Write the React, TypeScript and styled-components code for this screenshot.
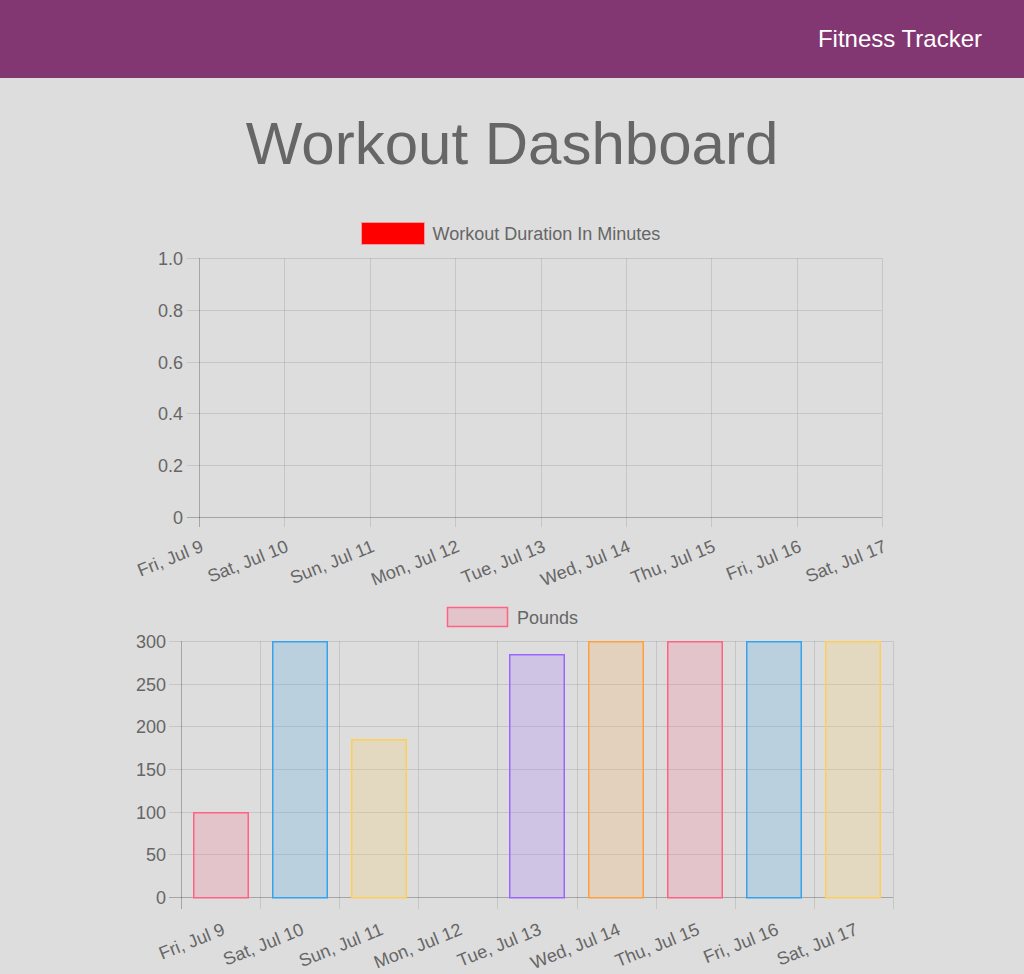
import React from 'react';
import styled, { createGlobalStyle } from 'styled-components';

const GlobalStyle = createGlobalStyle`
  html, body {
    margin: 0;
    padding: 0;
    background-color: #dddddd;
    font-family: "Liberation Sans", Arial, Helvetica, sans-serif;
  }
`;

const Header = styled.header`
  height: 78px;
  background-color: #833772;
  display: flex;
  align-items: center;
  justify-content: flex-end;
  padding-right: 42px;
`;

const Brand = styled.div`
  color: #ffffff;
  font-size: 24px;
  line-height: 28px;
`;

const Main = styled.main`
  display: flex;
  flex-direction: column;
  align-items: center;
`;

const Title = styled.h1`
  margin: 31px 0 32px;
  font-size: 60px;
  line-height: 69px;
  font-weight: 400;
  color: #666666;
  text-align: center;
`;

const ChartBox = styled.section`
  width: 768px;
  display: flex;
`;

const ChartSvg = styled.svg`
  display: block;
  font-family: "Liberation Sans", Arial, Helvetica, sans-serif;
  font-size: 18px;
  fill: #666666;
`;

const GRID = 'rgba(0,0,0,0.1)';
const AXIS = 'rgba(0,0,0,0.25)';
const ROT = 22;

const labels = [
  'Fri, Jul 9',
  'Sat, Jul 10',
  'Sun, Jul 11',
  'Mon, Jul 12',
  'Tue, Jul 13',
  'Wed, Jul 14',
  'Thu, Jul 15',
  'Fri, Jul 16',
  'Sat, Jul 17',
];

const palette = [
  [255, 99, 132],
  [54, 162, 235],
  [255, 206, 86],
  [75, 192, 192],
  [153, 102, 255],
  [255, 159, 64],
];

const pounds = [100, 300, 185, 0, 285, 300, 300, 300, 300];

const px = (v: number) => Math.round(v) + 0.5;

// line chart, empty dataset
const DurationChart = () => {
  const left = 71, right = 754, top = 48, bottom = 307;
  const yTicks = [1.0, 0.8, 0.6, 0.4, 0.2, 0];
  const step = (right - left) / (labels.length - 1);

  return (
    <ChartSvg width={768} height={384}>
      <rect x={233.5} y={12.5} width={63} height={22} fill="#ff0000" stroke="#f29a9a" strokeWidth={1} />
      <text x={304.5} y={24} dominantBaseline="central">Workout Duration In Minutes</text>

      {yTicks.map((t, i) => {
        const y = px(top + ((bottom - top) / 5) * i);
        return (
          <g key={t}>
            <line x1={59} x2={right} y1={y} y2={y} stroke={t === 0 ? AXIS : GRID} strokeWidth={1} />
            <text x={55} y={y} textAnchor="end" dominantBaseline="central">
              {t === 0 ? '0' : t.toFixed(1)}
            </text>
          </g>
        );
      })}

      {labels.map((l, i) => {
        const x = px(left + step * i);
        return (
          <g key={l}>
            <line x1={x} x2={x} y1={top} y2={bottom + 10} stroke={i === 0 ? AXIS : GRID} strokeWidth={1} />
            <text x={x + 5} y={341} textAnchor="end" transform={`rotate(-${ROT} ${x + 5} 341)`}>
              {l}
            </text>
          </g>
        );
      })}
    </ChartSvg>
  );
};

const PoundsChart = () => {
  const left = 53, right = 765, top = 47, bottom = 303;
  const yTicks = [300, 250, 200, 150, 100, 50, 0];
  const cat = (right - left) / labels.length;
  const barW = 56;
  const scale = (bottom - top) / 300;

  return (
    <ChartSvg width={768} height={378}>
      <rect x={319.5} y={13.5} width={60} height={19} fill="rgba(255,99,132,0.2)" stroke="rgb(255,99,132)" strokeWidth={1.5} />
      <text x={389} y={24} dominantBaseline="central">Pounds</text>

      {yTicks.map((t, i) => {
        const y = px(top + ((bottom - top) / 6) * i);
        return (
          <g key={t}>
            <line x1={41} x2={right} y1={y} y2={y} stroke={t === 0 ? AXIS : GRID} strokeWidth={1} />
            <text x={38} y={y} textAnchor="end" dominantBaseline="central">{t}</text>
          </g>
        );
      })}

      {Array.from({ length: labels.length + 1 }).map((_, i) => {
        const x = px(left + cat * i);
        return (
          <line key={i} x1={x} x2={x} y1={top} y2={bottom + 12} stroke={i === 0 ? AXIS : GRID} strokeWidth={1} />
        );
      })}

      {pounds.map((v, i) => {
        const [r, g, b] = palette[i % palette.length];
        const h = Math.round(v * scale);
        const x = Math.round(left + cat * i + (cat - barW) / 2) + 0.75;
        if (h <= 0) return null;
        return (
          <rect
            key={i}
            x={x}
            y={bottom - h + 0.75}
            width={barW - 1.5}
            height={h}
            fill={`rgba(${r},${g},${b},0.2)`}
            stroke={`rgb(${r},${g},${b})`}
            strokeWidth={1.5}
          />
        );
      })}

      {labels.map((l, i) => {
        const cx = left + cat * i + cat / 2 + 5.5;
        return (
          <text key={l} x={cx} y={340} textAnchor="end" transform={`rotate(-${ROT} ${cx} 340)`}>
            {l}
          </text>
        );
      })}
    </ChartSvg>
  );
};

const App = () => {
  return (
    <>
      <GlobalStyle />
      <Header>
        <Brand>Fitness Tracker</Brand>
      </Header>
      <Main>
        <Title>Workout Dashboard</Title>
        <ChartBox>
          <DurationChart />
        </ChartBox>
        <ChartBox>
          <PoundsChart />
        </ChartBox>
      </Main>
    </>
  );
};

export default App;
